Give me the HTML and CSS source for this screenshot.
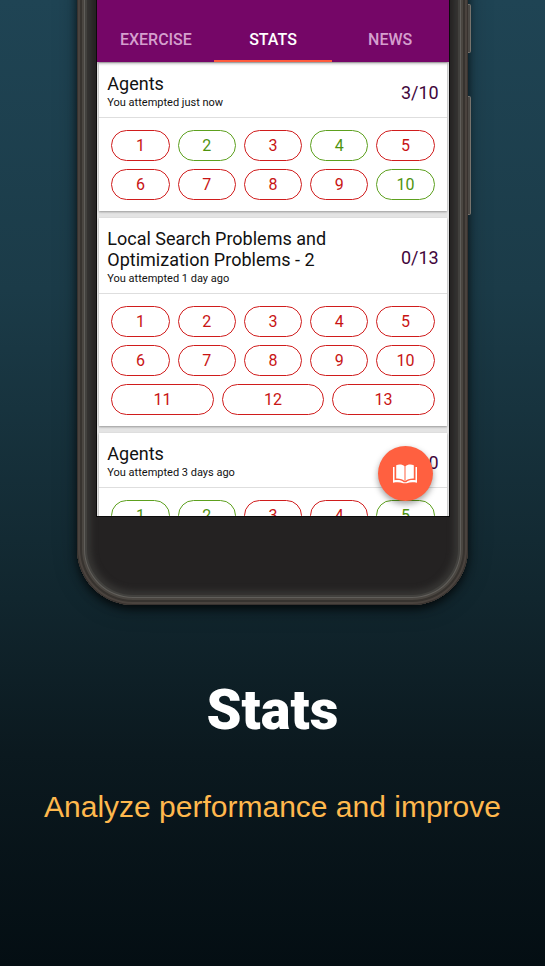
FILE: index.html
```html
<!DOCTYPE html>
<html lang="en">
<head>
<meta charset="utf-8">
<meta name="viewport" content="width=device-width, initial-scale=1">
<title>Stats</title>
<link rel="stylesheet" href="styles.css">
</head>
<body>
<div class="phone">
  <span class="side-key side-key-top"></span>
  <span class="side-key side-key-bottom"></span>
  <div class="screen">
    <nav class="tabs">
      <a class="tab" href="#exercise">EXERCISE</a>
      <a class="tab tab-active" href="#stats">STATS</a>
      <a class="tab" href="#news">NEWS</a>
    </nav>
    <main class="list" id="stats">
      <article class="card">
        <header class="card-head">
          <div><h2>Agents</h2><p>You attempted just now</p></div>
          <span class="score">3/10</span>
        </header>
        <div class="answers">
          <div class="row"><button>1</button><button class="right">2</button><button>3</button><button class="right">4</button><button>5</button></div>
          <div class="row"><button>6</button><button>7</button><button>8</button><button>9</button><button class="right">10</button></div>
        </div>
      </article>
      <article class="card">
        <header class="card-head">
          <div><h2>Local Search Problems and Optimization Problems - 2</h2><p>You attempted 1 day ago</p></div>
          <span class="score">0/13</span>
        </header>
        <div class="answers">
          <div class="row"><button>1</button><button>2</button><button>3</button><button>4</button><button>5</button></div>
          <div class="row"><button>6</button><button>7</button><button>8</button><button>9</button><button>10</button></div>
          <div class="row"><button>11</button><button>12</button><button>13</button></div>
        </div>
      </article>
      <article class="card">
        <header class="card-head">
          <div><h2>Agents</h2><p>You attempted 3 days ago</p></div>
          <span class="score">0</span>
        </header>
        <div class="answers">
          <div class="row"><button class="right">1</button><button class="right">2</button><button>3</button><button>4</button><button class="right">5</button></div>
        </div>
      </article>
    </main>
    <button class="fab" aria-label="Practice">
      <svg viewBox="0 0 24 20" width="24" height="20" aria-hidden="true">
        <path fill="#fff" d="M3.200 1.200C6 0 9.800.3 11.500 2.300V17.300C10.400 15 6.800 14.300 3.200 14.400ZM20.800 1.200C18 0 14.200.3 12.500 2.300V17.300C13.600 15 17.200 14.300 20.800 14.400Z"/>
        <path fill="#fff" d="M0 3H1.500V16.200C5.400 15.800 9 16.200 10.800 18.200H13.200C15 16.200 18.600 15.800 22.500 16.200V3H24V18.700C20 18 16.500 18.100 13.800 19.200H10.200C7.500 18.100 4 18 0 18.700Z"/>
      </svg>
    </button>
  </div>
</div>
<section class="caption">
  <h1>Stats</h1>
  <p>Analyze performance and improve</p>
</section>
</body>
</html>
```

FILE: styles.css
```css
* { box-sizing: border-box; }
body {
  display: flow-root;
  margin: 0;
  min-height: 100vh;
  padding: 0 14%;
  background: linear-gradient(#1f4454 0%, #1b3b48 30%, #11262e 62%, #0b191f 78%, #040e13 100%);
  font-family: Roboto, sans-serif;
}
h1, h2, p { margin: 0; font-weight: 400; }
.phone {
  position: relative;
  padding: 20px 19px 89px 20px;
  margin: -20px 1px 0;
  border-radius: 0 0 56px 56px;
  background: #242222;
  box-shadow:
    inset 0 0 0 1px #38322f,
    inset 0 0 0 3px #4a433e,
    inset 0 0 0 5px #37332f,
    inset 0 0 0 7px #4a4641,
    inset 0 0 0 8px #605e5a,
    inset 0 0 0 10px #42413e,
    inset 0 0 6px 14px #373634,
    0 4px 8px #000000b0,
    0 2px 24px #00000040;
}
.side-key {
  position: absolute;
  right: -3px;
  width: 3px;
  border: 1px solid #77736d;
  border-left: 0;
  border-radius: 0 2px 2px 0;
  background: #4b4844;
}
.side-key-top { top: 24px; height: 49px; }
.side-key-bottom { top: 116px; height: 119px; }
.screen {
  position: relative;
  height: 516px;
  overflow: hidden;
  background: #e4e4e4;
  outline: 1px solid #0c0b0b;
}
.tabs {
  position: relative;
  display: flex;
  height: 62px;
  padding-top: 18px;
  background: #750667;
  box-shadow: 0 1px 3px #00000070;
}
.tab {
  flex: 1;
  display: flex;
  align-items: center;
  justify-content: center;
  border-bottom: 2px solid transparent;
  color: #d49fcd;
  font-size: 16px;
  font-weight: 500;
  text-decoration: none;
}
.tab-active { color: #fff; border-color: #ff5a3c; }
.list {
  display: flex;
  flex-direction: column;
  gap: 7px;
  padding: 1px 2px 0;
}
.card { background: #fff; box-shadow: 0 1px 2px #00000055; }
.card-head {
  display: flex;
  align-items: center;
  justify-content: space-between;
  gap: 24px;
  padding: 10px 8px 5px;
  border-bottom: 1px solid #dedede;
}
.card-head h2 { font-size: 18px; line-height: 21px; color: #111; }
.card-head p { font-size: 11px; line-height: 18px; color: #111; }
.score { font-size: 18px; line-height: 24px; color: #41053b; }
.answers {
  display: flex;
  flex-direction: column;
  gap: 8px;
  padding: 12px 12px 11px;
}
.row { display: flex; gap: 8px; }
.row button {
  flex: 1;
  height: 31px;
  padding: 0;
  border: 1px solid #d01c1c;
  border-radius: 16px;
  background: #fff;
  color: #c81414;
  font: 16px Roboto, sans-serif;
}
.row .right { border-color: #5da01e; color: #4f930f; }
.fab {
  position: absolute;
  right: 16px;
  bottom: 15px;
  display: flex;
  align-items: center;
  justify-content: center;
  width: 55px;
  height: 55px;
  padding: 0;
  border: 0;
  border-radius: 50%;
  background: #ff6040;
  box-shadow: 0 3px 6px #00000060;
}
.caption { margin: 0 -14%; padding-top: 73px; text-align: center; }
.caption h1 {
  color: #fff;
  font-size: 56px;
  font-weight: 900;
  line-height: 64px;
}
.caption p {
  padding-top: 47px;
  color: #ffb84d;
  font: 30px/36px "Liberation Sans", sans-serif;
}
```
